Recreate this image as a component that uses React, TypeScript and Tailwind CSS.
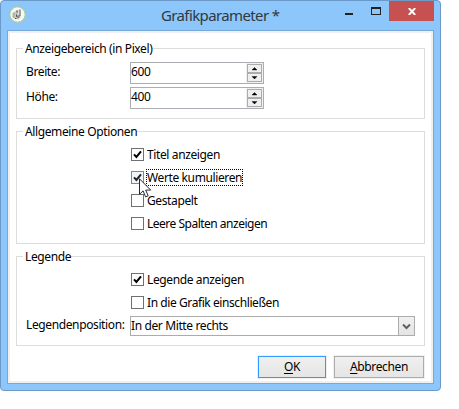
import React from "react";

function Group({ title, className, children }: { title: string; className: string; children: React.ReactNode }) {
  return (
    <fieldset className={`w-[409px] min-w-0 border border-[#dcdcdc] ${className}`}>
      <legend className="ml-[6px] h-[17px] whitespace-nowrap pl-[2px] leading-[17px]">{title}</legend>
      {children}
    </fieldset>
  );
}

function Spinner({ label, value }: { label: string; value: string }) {
  return (
    <div className="flex h-[22px] items-center">
      <span className="w-[104px] pb-[2px]">{label}</span>
      <div className="flex h-[22px] w-[134px] border border-[#abadb3] bg-white">
        <span className="flex-1 leading-[18px]">{value}</span>
        <div className="flex w-[17px] flex-col bg-[#f0f0f0] py-px pl-px pr-px">
          {["M3 5h5L5.5 2.5z", "M3 2.5h5L5.5 5z"].map((d) => (
            <span key={d} className="flex h-[9px] w-[15px] items-center justify-center border border-[#acacac] bg-[#efefef]">
              <svg width="11" height="7" viewBox="0 0 11 7">
                <path d={d} fill="#000" stroke="#000" strokeWidth=".4" />
              </svg>
            </span>
          ))}
        </div>
      </div>
    </div>
  );
}

function Check({ label, on, active, className = "" }: { label: string; on?: boolean; active?: boolean; className?: string }) {
  return (
    <div className="flex h-[23px] items-center pl-[105px]">
      <span
        className={`relative h-[13px] w-[13px] shrink-0 border ${active ? "border-[#3399ff] bg-[#eef5fd]" : "border-[#707070] bg-white"}`}
      >
        {on && (
          <svg className="block" width="11" height="11" viewBox="0 0 11 11">
            <path d="M2 5.4 4.4 8 9 2.3" fill="none" stroke={active ? "#212121" : "#000"} strokeWidth="2" />
          </svg>
        )}
        {active && (
          <svg className="absolute left-[7px] top-[6px] z-10" width="13" height="21" viewBox="0 0 13 21">
            <path d="M.5 .8v15.5l3.6-3.4 2.5 6 2.6-1.1-2.5-5.7h5z" fill="#fff" stroke="#242a38" strokeWidth="1" />
          </svg>
        )}
      </span>
      <span
        className={`ml-[2px] h-[17px] whitespace-nowrap border border-dotted leading-[16px] ${active ? "w-[97px] border-black" : "border-transparent"} ${className}`}
      >
        {label}
      </span>
    </div>
  );
}

export default function App() {
  return (
    <div className="h-[409px] w-[459px] overflow-hidden bg-white font-['Noto_Sans','Open_Sans',sans-serif] text-[12px] tracking-[-0.38px] text-black">
      <div className="flex h-[391px] w-[441px] flex-col rounded-[4px] border border-[#6c9ac8] bg-[#8cc6fa] pl-[6px]">
        <header className="flex h-[29px] w-[427px]">
          <svg className="ml-[2px] mt-[5px] shrink-0" width="17" height="17" viewBox="0 0 17 17">
            <circle cx="8.5" cy="8.5" r="7.7" fill="#f7f7f5" stroke="#a5cf78" />
            <path d="M3.5 7 6.5 5.5v7l-3-1z" fill="#b2b2ae" />
            <path d="M6.5 5 9.5 3.5v6.5l2.5 1-3 2.5-2.5-1.5z" fill="#c5c5c1" />
            <path d="M8 4.5v2M11 3.5v6.5h-2M7.5 8.5v2l2 1M6 12.5h1.5" fill="none" stroke="#4a4a4a" strokeWidth="1" />
          </svg>
          <h1 className="ml-[135px] mt-[4px] w-[119px] whitespace-nowrap text-[15px] leading-[20px] tracking-[-0.62px] text-[#303840]">
            Grafikparameter *
          </h1>
          <div className="ml-auto flex">
            <span className="mr-[18px] mt-[12px] h-[2px] w-[8px] bg-[#222]" />
            <span className="mr-[8px] mt-[6px] h-[8px] w-[10px] border border-t-2 border-[#222]" />
            <span className="flex h-[20px] w-[45px] items-center justify-center bg-[#c75050]">
              <svg width="8" height="7" viewBox="0 0 8 7">
                <path d="M.8 0 7.2 7M7.2 0 .8 7" stroke="#fff" strokeWidth="1.9" />
              </svg>
            </span>
          </div>
        </header>
        <main className="h-[354px] w-[427px] border border-[#76a8d8] bg-white">
          <div className="h-full border-2 border-[#f0f0f0] pl-[6px] pt-[7px]">
            <Group title="Anzeigebereich (in Pixel)" className="h-[79px]">
              <div className="flex flex-col gap-[3px] pl-[9px] pt-[5px]">
                <Spinner label="Breite:" value="600" />
                <Spinner label="Höhe:" value="400" />
              </div>
            </Group>
            <Group title="Allgemeine Optionen" className="mt-1 h-[121px]">
              <div className="pl-[9px] pt-[3px]">
                <Check label="Titel anzeigen" on />
                <Check label="Werte kumulieren" on active />
                <Check label="Gestapelt" />
                <Check label="Leere Spalten anzeigen" className="tracking-[-0.5px]" />
              </div>
            </Group>
            <Group title="Legende" className="mt-1 h-[98px]">
              <div className="pl-[9px] pt-[3px]">
                <Check label="Legende anzeigen" on />
                <Check label="In die Grafik einschließen" className="tracking-[-0.42px]" />
                <div className="mt-[2px] flex h-[20px]">
                  <span className="w-[104px] whitespace-nowrap leading-[17px]">Legendenposition:</span>
                  <div className="flex h-[20px] w-[285px] border border-[#acacac]">
                    <span className="flex-1 leading-[18px]">In der Mitte rechts</span>
                    <span className="flex w-[16px] items-center justify-center border-l border-[#acacac] bg-linear-to-b from-[#f0f0f0] to-[#e5e5e5]">
                      <svg width="9" height="7" viewBox="0 0 9 7">
                        <path d="M1 1.5 4.5 5 8 1.5" fill="none" stroke="#606060" strokeWidth="2" />
                      </svg>
                    </span>
                  </div>
                </div>
              </div>
            </Group>
            <div className="mt-[10px] flex w-[408px] justify-end gap-[8px]">
              <button className="h-[22px] w-[68px] border border-[#3399ff] bg-linear-to-b from-[#f0f0f0] to-[#e5e5e5] leading-[20px] outline outline-[#f0f0f0]">
                <u className="underline-offset-2">O</u>K
              </button>
              <button className="h-[22px] w-[90px] border border-[#acacac] bg-linear-to-b from-[#f0f0f0] to-[#e5e5e5] leading-[20px] outline outline-[#f0f0f0]">
                <u className="underline-offset-2">A</u>bbrechen
              </button>
            </div>
          </div>
        </main>
      </div>
    </div>
  );
}
